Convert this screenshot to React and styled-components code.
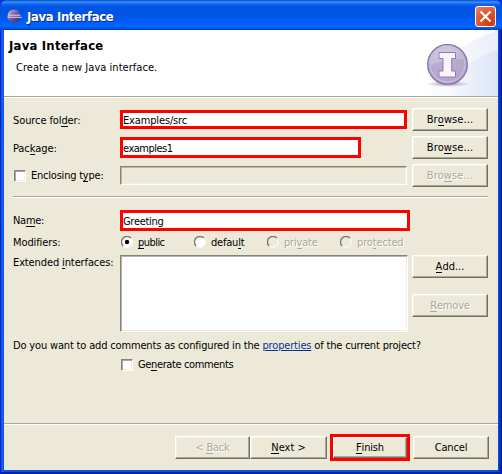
import React from 'react';
import styled, { createGlobalStyle, css } from 'styled-components';

const Global = createGlobalStyle`
  *, *::before, *::after { box-sizing: border-box; }
  body { margin: 0; background: #0831d9; }
  u { text-decoration: none; box-shadow: 0 1px 0 currentColor; display: inline-block; line-height: 11px; height: 11px; }
`;

const Window = styled.div`
  width: 502px;
  height: 474px;
  display: flex;
  flex-direction: column;
  padding: 0 4px 2px;
  background: linear-gradient(90deg, #0019cf 0, #0831d9 1px, #166aee 2px, #0855dd 4px, #0855dd 498px, #0441d8 499px, #001ea0 501px, #00138c 502px);
  border-radius: 7px 7px 0 0;
  border-bottom: 2px solid #0420b0;
  color: #000;
  font: 11px/14px 'DejaVu Sans Condensed', 'DejaVu Sans', sans-serif;
  font-stretch: condensed;
  overflow: hidden;
`;

const TitleBar = styled.header`
  flex: 0 0 30px;
  margin: 0 -4px;
  padding: 3px 6px 0 7px;
  display: flex;
  align-items: center;
  gap: 5px;
  border-radius: 7px 7px 0 0;
  background: linear-gradient(180deg, #0848ca 0, #3a93ff 2px, #1265ee 4px, #0054e5 7px, #0054e3 14px, #005cf8 21px, #0066ff 26px, #005af0 28px, #0038c0 30px);
`;

const WindowTitle = styled.h1`
  flex: 1;
  margin: 0;
  color: #fff;
  font: bold 13px/16px 'DejaVu Sans Condensed', 'DejaVu Sans', sans-serif;
  font-stretch: condensed;
  letter-spacing: ${(p) => p.$spacing};
  text-shadow: 1px 1px 0 #0b2a88;
`;

const CloseButton = styled.button`
  width: 21px;
  height: 21px;
  padding: 0;
  border: 1px solid #fff;
  border-radius: 3px;
  background: radial-gradient(circle at 75% 85%, #d5350f 0, #e2532b 50%, #eb8264 100%);
  svg { display: block; margin: auto; }
`;

const Banner = styled.section`
  flex: 0 0 68px;
  display: flex;
  justify-content: space-between;
  background: #fff;
  border-bottom: 1px solid #fff;
  box-shadow: inset 0 -1px 0 #aca899;
`;

const BannerText = styled.div`
  padding: 8px 0 0 5px;
`;

const BannerTitle = styled.h2`
  margin: 0;
  font-size: 13px;
  line-height: 16px;
  letter-spacing: 0.2px;
`;

const BannerDescription = styled.p`
  margin: 7px 0 0 7px;
  letter-spacing: 0.04px;
`;

const Body = styled.main`
  flex: 0 0 325px;
  padding: 10px 10px 0 9px;
  background: #ece9d8;
`;

const Row = styled.div`
  display: flex;
  align-items: ${(p) => p.$align || 'center'};
  height: ${(p) => p.$height}px;
  margin-top: ${(p) => p.$gap || 0}px;
`;

const Label = styled.label`
  flex: 0 0 107px;
  display: flex;
  align-items: center;
  gap: 5px;
  padding: ${(p) => p.$inset || '2px 0 0'};
  white-space: pre;
  letter-spacing: ${(p) => p.$spacing || 0};
`;

const FieldCell = styled.div`
  flex: 1;
  display: flex;
`;

const highlight = css`
  border: 3px solid #fe0000;
  padding: 1px 0 0;
`;

const sunken = css`
  border: 1px solid;
  border-color: #858279 #fff #fff #858279;
  box-shadow: inset 1px 1px 0 #b9b6a8, inset -1px -1px 0 #f1efe2;
`;

const TextField = styled.input`
  width: ${(p) => p.$width}px;
  height: ${(p) => p.$height}px;
  border-radius: 0;
  outline: none;
  background: ${(p) => (p.disabled ? '#ece9d8' : '#fff')};
  color: #000;
  font: inherit;
  letter-spacing: ${(p) => p.$spacing || 0};
  ${(p) => (p.disabled ? sunken : highlight)}
`;

const ListBox = styled.div`
  width: 288px;
  height: 77px;
  background: #fff;
  ${sunken}
`;

const Button = styled.button`
  flex: 0 0 auto;
  width: ${(p) => p.$width || 76}px;
  height: 23px;
  padding: 0;
  border: 1px solid;
  border-color: #fff #716f64 #716f64 #fff;
  box-shadow: inset -1px -1px 0 #aca899, inset 1px 1px 0 #f5f3e9;
  background: #ece9d8;
  color: ${(p) => (p.disabled ? '#aca899' : '#000')};
  text-shadow: ${(p) => (p.disabled ? '1px 1px 0 #fff' : 'none')};
  font: inherit;
  letter-spacing: ${(p) => p.$spacing || 0};
`;

const ButtonStack = styled.div`
  display: grid;
  gap: 16px;
`;

const FinishFrame = styled.div`
  display: flex;
  margin: 0 3px;
  border: 3px solid #fe0000;
  button { height: 21px; }
`;

const Check = styled.span`
  flex: 0 0 12px;
  width: 12px;
  height: 12px;
  background: #fff;
  border: 1px solid;
  border-color: #858279 #fff #fff #858279;
  box-shadow: inset 1px 1px 0 #aca899, inset -1px -1px 0 #f1efe2;
`;

const RadioGroup = styled.div`
  flex: 1;
  display: grid;
  grid-template-columns: 73px 73px 73px 1fr;
`;

const RadioOption = styled.label`
  display: flex;
  align-items: center;
  gap: 5px;
  padding-left: 1px;
  color: ${(p) => (p.$disabled ? '#aca899' : '#000')};
  text-shadow: ${(p) => (p.$disabled ? '1px 1px 0 #fff' : 'none')};
  letter-spacing: ${(p) => p.$spacing || 0};
  span { padding-top: 1px; }
`;

const Separator = styled.div`
  height: 2px;
  margin-top: ${(p) => p.$gap || 0}px;
  border-top: 1px solid #aca899;
  border-bottom: 1px solid #fff;
`;

const Question = styled.p`
  margin: 7px 0 0;
  white-space: nowrap;
  letter-spacing: -0.165px;
  a { color: #0a3296; text-decoration: underline; }
`;

const CommentOption = styled.label`
  display: flex;
  align-items: center;
  gap: 5px;
  margin: 4px 0 0 108px;
  letter-spacing: -0.37px;
  span + span { padding-top: 1px; }
`;

const Footer = styled.footer`
  flex: 1;
  display: flex;
  align-items: center;
  justify-content: flex-end;
  padding: 1px 9px 0 0;
  background: #ece9d8;
  border-top: 1px solid #aca899;
  box-shadow: inset 0 1px 0 #fff;
`;

const EclipseLogo = () => (
  <svg width="15" height="15" viewBox="0 0 15 15">
    <defs>
      <linearGradient id="eclipse" x1="0" y1="0" x2="1" y2="1">
        <stop offset="0" stopColor="#d3b0c4" />
        <stop offset=".5" stopColor="#6a5ba6" />
        <stop offset="1" stopColor="#29246c" />
      </linearGradient>
    </defs>
    <circle cx="7" cy="7" r="6.600" fill="url(#eclipse)" />
    <path d="M1 6.200h12.500M.6 8.300h14" stroke="#d9d5ef" strokeWidth="1" />
    <path d="M3 3Q1.400 5 1.500 9" stroke="#e0b4b8" fill="none" />
  </svg>
);

const InterfaceArt = () => (
  <svg width="98" height="66" viewBox="0 0 98 66">
    <defs>
      <linearGradient id="sweep" x1="0" x2="1">
        <stop offset="0" stopColor="#fff" />
        <stop offset="1" stopColor="#dfe6f7" />
      </linearGradient>
      <linearGradient id="sweepInner" x1="0" x2="1">
        <stop offset="0" stopColor="#dce4f7" stopOpacity="0" />
        <stop offset="1" stopColor="#d3def5" stopOpacity=".6" />
      </linearGradient>
      <linearGradient id="orb" x1=".3" y1="0" x2=".6" y2="1">
        <stop offset="0" stopColor="#d0c8df" />
        <stop offset=".5" stopColor="#b7a9ce" />
        <stop offset="1" stopColor="#b7a6cf" />
      </linearGradient>
      <radialGradient id="shade">
        <stop offset="0" stopColor="#9a98b4" />
        <stop offset="1" stopColor="#9a98b4" stopOpacity="0" />
      </radialGradient>
    </defs>
    <path d="M98 0C74 8 38 27 24 66H98Z" fill="url(#sweep)" opacity=".65" />
    <path d="M98 20C70 28 55 43 48 66H98Z" fill="url(#sweepInner)" />
    <ellipse cx="48" cy="54" rx="22" ry="3" fill="url(#shade)" />
    <circle cx="47.500" cy="34.500" r="19.800" fill="url(#orb)" stroke="#83749f" strokeWidth="1.300" />
    <circle cx="47.500" cy="34.500" r="17.400" fill="none" stroke="#cdc3de" strokeWidth="1" />
    <path d="M31 34A16.500 16.500 0 0 1 63 29Q49 29 31 34Z" fill="#efedf6" opacity=".2" />
    <path d="M39 22.500H55.500V28.500H51.700V41H55.500V47H39V41H43V28.500H39Z" fill="#f8f6fc" stroke="#8c7db0" strokeWidth="1" />
  </svg>
);

const RadioMark = ({ checked, disabled }) => (
  <svg width="12" height="12" viewBox="0 0 12 12">
    <circle cx="6" cy="6" r="5.200" fill={disabled ? '#ece9d8' : '#fff'} stroke="#fff" />
    <path d="M2.100 9.900A5.400 5.400 0 0 1 9.900 2.100" fill="none" stroke="#7c796e" strokeWidth="1.400" />
    {checked && <circle cx="6" cy="6" r="2.200" fill="#000" />}
  </svg>
);

export default function App() {
  return (
    <>
      <Global />
      <Window>
        <TitleBar>
          <EclipseLogo />
          <WindowTitle $spacing="-0.38px">Java Interface</WindowTitle>
          <CloseButton aria-label="Close">
            <svg width="13" height="13" viewBox="0 0 13 13">
              <path d="M1.500 1.500l10 10M11.500 1.500l-10 10" stroke="#fff" strokeWidth="2.200" />
            </svg>
          </CloseButton>
        </TitleBar>

        <Banner>
          <BannerText>
            <BannerTitle>Java Interface</BannerTitle>
            <BannerDescription>Create a new Java interface.</BannerDescription>
          </BannerText>
          <InterfaceArt />
        </Banner>

        <Body>
          <Row $height={23}>
            <Label $spacing="-0.1px"><span>Source fol<u>d</u>er:</span></Label>
            <FieldCell><TextField $width={287} $height={19} $spacing="-0.15px" defaultValue="Examples/src" /></FieldCell>
            <Button $spacing="0.1px">Br<u>o</u>wse...</Button>
          </Row>
          <Row $height={23} $gap={5}>
            <Label $spacing="-0.1px"><span>Pac<u>k</u>age:</span></Label>
            <FieldCell><TextField $width={241} $height={21} $spacing="-0.5px" defaultValue="examples1" /></FieldCell>
            <Button $spacing="0.1px">Bro<u>w</u>se...</Button>
          </Row>
          <Row $height={23} $gap={5}>
            <Label $spacing="-0.22px" $inset="0 0 0 1px"><Check /><span>Enclosing t<u>y</u>pe:</span></Label>
            <FieldCell><TextField $width={287} $height={19} disabled /></FieldCell>
            <Button disabled $spacing="0.1px">Bro<u>w</u>se...</Button>
          </Row>
          <Separator $gap={9} />
          <Row $height={21} $gap={12}>
            <Label $spacing="-0.3px" $inset="0"><span>Na<u>m</u>e:</span></Label>
            <FieldCell><TextField $width={290} $height={21} $spacing="-0.3px" defaultValue="Greeting" /></FieldCell>
          </Row>
          <Row $height={16} $gap={3}>
            <Label $spacing="-0.1px">Modifiers:</Label>
            <RadioGroup>
              <RadioOption $spacing="-0.55px"><RadioMark checked /><span><u>p</u>ublic</span></RadioOption>
              <RadioOption $spacing="-0.2px"><RadioMark /><span>defau<u>l</u>t</span></RadioOption>
              <RadioOption $disabled $spacing="-0.2px"><RadioMark disabled /><span>pri<u>v</u>ate</span></RadioOption>
              <RadioOption $disabled $spacing="-0.15px"><RadioMark disabled /><span>pro<u>t</u>ected</span></RadioOption>
            </RadioGroup>
          </Row>
          <Row $height={77} $gap={5} $align="flex-start">
            <Label $spacing="-0.12px" $inset="1px 0 0"><span>Extended <u>i</u>nterfaces:</span></Label>
            <FieldCell><ListBox /></FieldCell>
            <ButtonStack>
              <Button><u>A</u>dd...</Button>
              <Button disabled $spacing="-0.2px"><u>R</u>emove</Button>
            </ButtonStack>
          </Row>
          <Question>
            Do you want to add comments as configured in the <a>properties</a> of the current project?
          </Question>
          <CommentOption><Check /><span>Ge<u>n</u>erate comments</span></CommentOption>
        </Body>

        <Footer>
          <Button disabled $width={75} $spacing="-0.25px">&lt; <u>B</u>ack</Button>
          <Button $width={77}><u>N</u>ext &gt;</Button>
          <FinishFrame><Button $width={74} $spacing="-0.15px"><u>F</u>inish</Button></FinishFrame>
          <Button $spacing="-0.15px">Cancel</Button>
        </Footer>
      </Window>
    </>
  );
}
